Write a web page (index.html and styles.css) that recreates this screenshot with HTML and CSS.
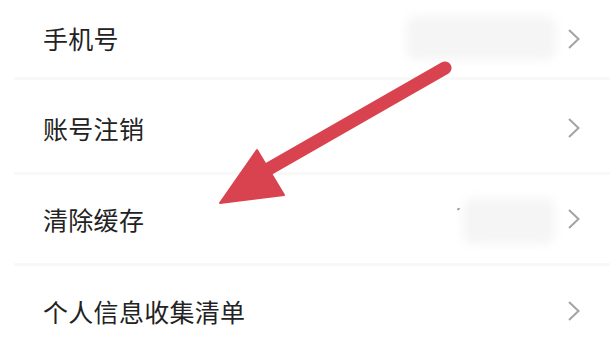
FILE: index.html
```html
<!DOCTYPE html>
<html lang="zh">
<head>
<meta charset="utf-8">
<link rel="stylesheet" href="styles.css">
</head>
<body>
<div class="page">
  <ul class="list">
    <li class="row row-1"><span class="label">手机号</span><span class="chev"><svg width="14" height="22" viewBox="0 0 14 22"><path d="M2 2 L11.5 11 L2 20" fill="none" stroke="#a3a3a3" stroke-width="2"/></svg></span></li>
    <li class="row row-2"><span class="label">账号注销</span><span class="chev"><svg width="14" height="22" viewBox="0 0 14 22"><path d="M2 2 L11.5 11 L2 20" fill="none" stroke="#a3a3a3" stroke-width="2"/></svg></span></li>
    <li class="row row-3"><span class="label">清除缓存</span><span class="chev"><svg width="14" height="22" viewBox="0 0 14 22"><path d="M2 2 L11.5 11 L2 20" fill="none" stroke="#a3a3a3" stroke-width="2"/></svg></span></li>
    <li class="row row-4"><span class="label">个人信息收集清单</span><span class="chev"><svg width="14" height="22" viewBox="0 0 14 22"><path d="M2 2 L11.5 11 L2 20" fill="none" stroke="#a3a3a3" stroke-width="2"/></svg></span></li>
  </ul>
  <div class="blob blob-1"></div>
  <div class="blob blob-2"></div>
  <div class="tick"></div>
  <svg class="arrow" width="610" height="357" viewBox="0 0 610 357">
    <line x1="445" y1="68" x2="258" y2="175" stroke="#d9434f" stroke-width="13" stroke-linecap="round"/>
    <polygon points="220,203 257,150 284,195" fill="#d9434f" stroke="#d9434f" stroke-width="2" stroke-linejoin="round"/>
  </svg>
</div>
</body>
</html>
```
FILE: styles.css
```css
html, body {
  margin: 0;
  padding: 0;
  background: #ffffff;
}
.page {
  position: relative;
  width: 610px;
  height: 357px;
  overflow: hidden;
  font-family: "Noto Sans CJK SC", "Noto Sans", sans-serif;
  color: #222222;
}
.list {
  list-style: none;
  margin: 0;
  padding: 0 0 0 14px;
}
.row {
  display: flex;
  align-items: center;
  justify-content: space-between;
  padding: 0 29px 0 29px;
  box-sizing: border-box;
  border-top: 3px solid #f8f8f8;
}
.row-1 { height: 77px; border-top: none; }
.row-2 { height: 95px; padding-top: 4px; }
.row-3 { height: 91px; }
.row-4 { height: 94px; padding-bottom: 1px; }
.label {
  font-size: 25px;
  line-height: 1;
  letter-spacing: 0.3px;
}
.chev {
  display: flex;
  width: 14px;
  height: 22px;
}
.blob {
  position: absolute;
  background: #f5f5f5;
  border-radius: 10px;
  filter: blur(5px);
}
.blob-1 { left: 406px; top: 16px; width: 150px; height: 44px; }
.blob-2 { left: 463px; top: 198px; width: 92px; height: 46px; }
.tick {
  position: absolute;
  left: 457px;
  top: 208px;
  width: 3px;
  height: 2px;
  background: #999;
  border-radius: 1px;
  transform: rotate(-30deg);
}
.arrow {
  position: absolute;
  left: 0;
  top: 0;
}
```
